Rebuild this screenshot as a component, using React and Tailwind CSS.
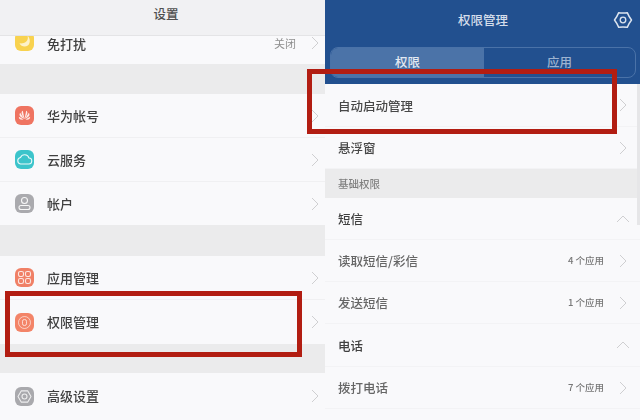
import React from "react";

const font = "font-['Noto_Sans_CJK_SC','Liberation_Sans',sans-serif]";

const Chevron = () => (
  <svg width="8" height="14" viewBox="0 0 8 14" fill="none" className="text-[#cfcfd1]">
    <path d="M1 1l6 6-6 6" stroke="currentColor" strokeWidth="1" />
  </svg>
);

const ChevronUp = () => (
  <svg width="14" height="8" viewBox="0 0 14 8" fill="none" className="text-[#cfcfd1]">
    <path d="M1 7l6-6 6 6" stroke="currentColor" strokeWidth="1" />
  </svg>
);

const IconBox = ({ bg, children }) => (
  <div className={`w-[19px] h-[19px] rounded-[6px] flex items-center justify-center shrink-0 ${bg}`}>
    <svg width="17" height="17" viewBox="0 0 17 17" fill="none">
      {children}
    </svg>
  </div>
);

const icons = {
  moon: (
    <IconBox bg="bg-[#f8d24f]">
      <path d="M11.500 2.500c1.500 5-2 8.500-8 7.800C5 13.500 9 14.500 11.800 12.500c2.700-2.200 2.700-7 -.3-10z" fill="#fff" fillOpacity=".7" />
    </IconBox>
  ),
  huawei: (
    <IconBox bg="bg-[#ef7461]">
      <path d="M8.500 12L6.800 3.800C5 4.500 5 7 8.500 12zM8.500 12l1.700-8.200c1.800.7 1.800 3.200-1.700 8.200zM8 12L4.200 5.800C2.800 7.500 3.300 9.800 8 12zM9 12l3.800-6.200c1.400 1.700.9 4-3.800 6.200zM7.700 12.500L2.800 9.700c0 2.300 1.700 3.400 4.900 2.800zM9.300 12.500l4.900-2.800c0 2.300-1.700 3.400-4.900 2.800z" fill="#fff" fillOpacity=".85" />
    </IconBox>
  ),
  cloud: (
    <IconBox bg="bg-[#3cc4cb]">
      <path d="M4.500 13h8a3 3 0 0 0 .5-6A4.500 4.500 0 0 0 4.500 6.500 3.300 3.300 0 0 0 4.500 13z" stroke="#fff" strokeOpacity=".9" strokeWidth="1.100" />
    </IconBox>
  ),
  user: (
    <IconBox bg="bg-[#aaaaae]">
      <circle cx="8.500" cy="5.500" r="3" stroke="#fff" strokeOpacity=".9" strokeWidth="1.100" />
      <rect x="3" y="10.500" width="11" height="4" rx="2" stroke="#fff" strokeOpacity=".9" strokeWidth="1.100" />
    </IconBox>
  ),
  apps: (
    <IconBox bg="bg-[#f08066]">
      <rect x="2.500" y="2.500" width="5" height="5" rx="1.700" stroke="#fff" strokeOpacity=".8" strokeWidth="1.100" />
      <rect x="9.500" y="2.500" width="5" height="5" rx="1.700" stroke="#fff" strokeOpacity=".8" strokeWidth="1.100" />
      <rect x="2.500" y="9.500" width="5" height="5" rx="1.700" stroke="#fff" strokeOpacity=".8" strokeWidth="1.100" />
      <rect x="9.500" y="9.500" width="5" height="5" rx="1.700" stroke="#fff" strokeOpacity=".8" strokeWidth="1.100" />
    </IconBox>
  ),
  lock: (
    <IconBox bg="bg-[#f38468]">
      <circle cx="8.500" cy="8.500" r="6" stroke="#fff" strokeOpacity=".6" strokeWidth="1" />
      <rect x="6.500" y="5.500" width="4" height="6" rx="1.800" stroke="#fff" strokeOpacity=".7" strokeWidth="1" />
    </IconBox>
  ),
  gear: (
    <IconBox bg="bg-[#a9a9ad]">
      <path d="M15 8.500l-3.200 5.600H5.200L2 8.500l3.200-5.600h6.600z" stroke="#fff" strokeOpacity=".8" strokeWidth="1.100" strokeLinejoin="round" />
      <circle cx="8.500" cy="8.500" r="2.500" stroke="#fff" strokeOpacity=".8" strokeWidth="1.100" />
    </IconBox>
  ),
};

const SettingRow = ({ icon, label, height, line = true }) => (
  <div className={`flex items-center pl-[15px] pr-[6px] shrink-0 ${height} ${line ? "border-b border-[#f0f0f2]" : ""}`}>
    {icons[icon]}
    <span className="ml-[13px] mb-[1px] text-[13px] leading-none font-medium text-[#404040]">{label}</span>
    <div className="ml-auto">
      <Chevron />
    </div>
  </div>
);

const Gap = ({ height }) => <div className={`bg-[#ebebec] shrink-0 ${height}`} />;

const PermRow = ({ label, count, height = "h-[42px]", dark }) => (
  <div className={`flex items-center pl-[13px] pr-[13px] border-b border-[#f3f3f5] shrink-0 ${height}`}>
    <span className={`pt-[2px] text-[12.5px] font-medium ${dark ? "text-[#484848]" : "text-[#666]"}`}>{label}</span>
    {count && <span className="ml-auto mr-[15px] text-[9.5px] font-medium text-[#777]">{count}</span>}
    <div className={count ? "" : "ml-auto"}>
      <Chevron />
    </div>
  </div>
);

const GroupRow = ({ label, height = "h-[42px]" }) => (
  <div className={`flex items-center pl-[13px] pr-[10px] border-b border-[#f3f3f5] shrink-0 ${height}`}>
    <span className="pt-[2px] text-[12.5px] font-medium text-[#404040]">{label}</span>
    <div className="ml-auto">
      <ChevronUp />
    </div>
  </div>
);

const App = () => {
  return (
    <div className={`relative flex w-[640px] h-[420px] overflow-hidden bg-[#f9f9fb] ${font}`}>
      <div className="w-[325px] shrink-0 flex flex-col blur-[0.5px]">
        <div className="h-[36px] shrink-0 flex items-center justify-center pl-[7px] pb-[6px] bg-[#f1f1f3] border-b border-[#e4e4e6] text-[12.5px] font-medium text-[#505050]">
          设置
        </div>
        {/* list is scrolled, the first icon sits partly under the header */}
        <div className="h-[28px] shrink-0 flex items-start pl-[15px] pr-[6px]">
          <div className="h-[15px] overflow-hidden flex items-end">{icons.moon}</div>
          <span className="ml-[13px] mt-[1px] text-[13px] leading-none font-medium text-[#404040]">免打扰</span>
          <span className="ml-auto mr-[15px] mt-[2px] text-[11px] leading-none text-[#8f8f8f]">关闭</span>
          <Chevron />
        </div>
        <Gap height="h-[30px]" />
        <SettingRow icon="huawei" label="华为帐号" height="h-[44px]" />
        <SettingRow icon="cloud" label="云服务" height="h-[44px]" />
        <SettingRow icon="user" label="帐户" height="h-[43px]" line={false} />
        <Gap height="h-[31px]" />
        <SettingRow icon="apps" label="应用管理" height="h-[44px]" />
        <SettingRow icon="lock" label="权限管理" height="h-[44px]" line={false} />
        <Gap height="h-[29px]" />
        <SettingRow icon="gear" label="高级设置" height="h-[46px]" line={false} />
      </div>

      <div className="relative flex-1 flex flex-col blur-[0.5px]">
        <div className="h-[84px] shrink-0 bg-[#22508f] pl-[5px] pr-[4px]">
          <div className="relative h-[40px] mb-[7px] flex items-center justify-center text-[12.5px] font-medium text-[#d5deeb]">
            权限管理
            <svg width="20" height="20" viewBox="0 0 20 20" fill="none" className="absolute right-[3px] top-[10px] text-[#dce4ef]">
              <path d="M18.500 10Q15.900 13.400 14.250 17.360Q10 16.800 5.750 17.360Q4.100 13.400 1.500 10Q4.100 6.600 5.750 2.640Q10 3.200 14.250 2.640Q15.900 6.600 18.500 10z" stroke="currentColor" strokeWidth="1.500" strokeLinejoin="round" />
              <circle cx="10" cy="10" r="2.800" stroke="currentColor" strokeWidth="1.300" />
            </svg>
          </div>
          <div className="flex h-[31px] rounded-[8px] border border-[#4a72a8] overflow-hidden text-[12.5px] font-medium">
            <div className="w-[153px] flex items-center justify-center bg-[#4b73a8] text-[#e3e9f2]">权限</div>
            <div className="flex-1 flex items-center justify-center text-[#9db3d0]">应用</div>
          </div>
        </div>
        <PermRow label="自动启动管理" height="h-[43px]" dark />
        <PermRow label="悬浮窗" dark />
        <div className="h-[29px] shrink-0 flex items-center pl-[13px] bg-[#ebebec] text-[10.5px] font-medium text-[#808080]">
          基础权限
        </div>
        <GroupRow label="短信" />
        <PermRow label="读取短信/彩信" count="4 个应用" />
        <PermRow label="发送短信" count="1 个应用" />
        <GroupRow label="电话" height="h-[43px]" />
        <PermRow label="拨打电话" count="7 个应用" />
        {/* scrollbar */}
        <div className="absolute right-0 top-[84px] w-[3px] h-[141px] bg-[#e6e6e8]" />
      </div>

      <div className="absolute left-[5px] top-[291px] w-[297px] h-[66px] border-[5px] border-[#b21d12]" />
      <div className="absolute left-[307px] top-[69px] w-[310px] h-[65px] border-[5px] border-[#b21d12]" />
    </div>
  );
};

export default App;
